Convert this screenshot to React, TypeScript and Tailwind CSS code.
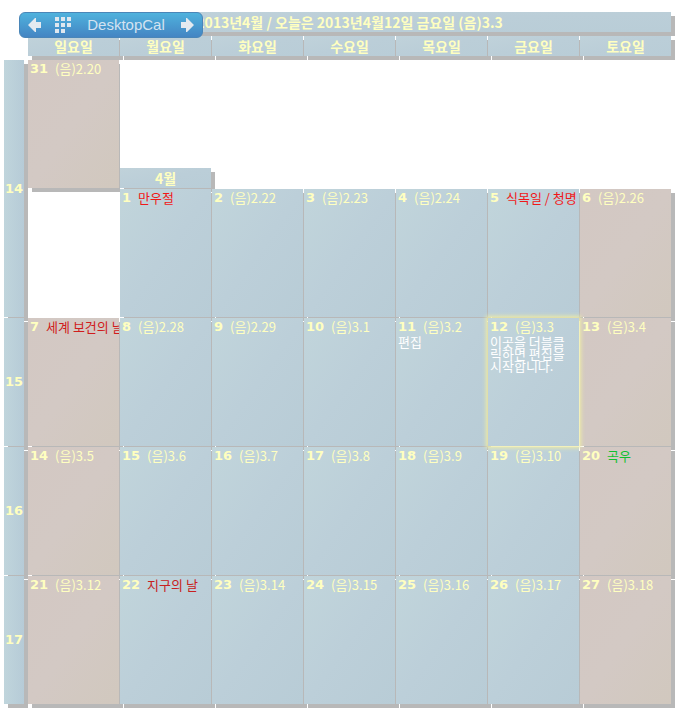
import React from 'react';
import clsx from 'clsx';

type Day = {
  date: number;
  label: string;
  color?: string;
  memo?: string;
  weekend?: boolean;
  today?: boolean;
};

type Week = { no: number; days: Day[] };

const WEEKDAYS = ['일요일', '월요일', '화요일', '수요일', '목요일', '금요일', '토요일'];

const APRIL_FIRST: Day[] = [
  { date: 1, label: '만우절', color: 'text-[#f01818]' },
  { date: 2, label: '(음)2.22' },
  { date: 3, label: '(음)2.23' },
  { date: 4, label: '(음)2.24' },
  { date: 5, label: '식목일 / 청명', color: 'text-[#f01818]' },
  { date: 6, label: '(음)2.26', weekend: true },
];

const WEEKS: Week[] = [
  {
    no: 15,
    days: [
      { date: 7, label: '세계 보건의 날', color: 'text-[#d01c1c]', weekend: true },
      { date: 8, label: '(음)2.28' },
      { date: 9, label: '(음)2.29' },
      { date: 10, label: '(음)3.1' },
      { date: 11, label: '(음)3.2', memo: '편집' },
      { date: 12, label: '(음)3.3', memo: '이곳을 더블클릭하면 편집을 시작합니다.', today: true },
      { date: 13, label: '(음)3.4', weekend: true },
    ],
  },
  {
    no: 16,
    days: [
      { date: 14, label: '(음)3.5', weekend: true },
      { date: 15, label: '(음)3.6' },
      { date: 16, label: '(음)3.7' },
      { date: 17, label: '(음)3.8' },
      { date: 18, label: '(음)3.9' },
      { date: 19, label: '(음)3.10' },
      { date: 20, label: '곡우', color: 'text-[#10c030]', weekend: true },
    ],
  },
  {
    no: 17,
    days: [
      { date: 21, label: '(음)3.12', weekend: true },
      { date: 22, label: '지구의 날', color: 'text-[#c82020]' },
      { date: 23, label: '(음)3.14' },
      { date: 24, label: '(음)3.15' },
      { date: 25, label: '(음)3.16' },
      { date: 26, label: '(음)3.17' },
      { date: 27, label: '(음)3.18', weekend: true },
    ],
  },
];

const GRID = 'grid grid-cols-[23px_repeat(7,minmax(0,1fr))] gap-px';
const SHADOW = 'shadow-[4px_4px_0_#b8b8b8]';
const BAR = 'bg-linear-to-br from-[#c0d2da] via-[#bbced8] to-[#b9cdd7]';
const BAR_TEXT = 'text-sm leading-5 font-bold';

const Toolbar: React.FC = () => (
  <div className="absolute top-3 left-[19px] z-20 flex h-[26px] w-[184px] items-center rounded-md border border-[#4a86b8] bg-linear-to-b from-[#4fb2dd] to-[#4485c3] px-2">
    <button type="button" aria-label="이전 달" className="text-[#e4eaf0]">
      <svg width="14" height="16" viewBox="0 0 14 16" fill="currentColor">
        <path d="M0 8 L7 1 H8 V5 H13 V11 H8 V15 H7 Z" />
      </svg>
    </button>
    <button type="button" aria-label="메뉴" className="ml-3 text-[#dfe7ef]">
      <svg width="18" height="18" viewBox="0 0 18 18" fill="currentColor">
        <path d="M1 1h4v4h-4z M7 1h4v4h-4z M13 1h4v4h-4z M1 7h4v4h-4z M7 7h4v4h-4z M13 7h4v4h-4z M1 13h4v4h-4z M7 13h4v4h-4z" />
      </svg>
    </button>
    <span className="flex-1 text-center font-['Liberation_Sans',sans-serif] text-[15px] text-[#d3e3f1]">DesktopCal</span>
    <button type="button" aria-label="다음 달" className="text-[#e4eaf0]">
      <svg width="14" height="16" viewBox="0 0 14 16" fill="currentColor">
        <path d="M14 8 L7 1 H6 V5 H1 V11 H6 V15 H7 Z" />
      </svg>
    </button>
  </div>
);

const WeekNo: React.FC<{ no: number; tall?: boolean }> = ({ no, tall }) => (
  <th
    scope="row"
    className={clsx(
      "mr-[3px] flex items-center justify-center bg-linear-to-r from-[#c0d5dc] to-[#b6cbd7] p-0 font-['DejaVu_Sans',sans-serif] font-bold",
      SHADOW,
      tall && 'row-span-2',
    )}
  >
    {no}
  </th>
);

const DayCell: React.FC<{ day: Day; className?: string }> = ({ day, className }) => (
  <td
    className={clsx(
      'h-32 overflow-hidden p-0 pl-0.5',
      day.weekend
        ? 'bg-linear-to-br from-[#d3c8c3] via-[#d3c9c4] to-[#d1c8be]'
        : 'bg-linear-to-br from-[#c1d5db] via-[#bccfd9] to-[#b8ccd6]',
      day.today ? 'relative z-10 shadow-[0_0_4px_2px_#eeeca6]' : SHADOW,
      className,
    )}
  >
    <div className="flex h-[18px] items-center gap-[7px] whitespace-nowrap">
      <span className="font-['DejaVu_Sans',sans-serif] font-bold">{day.date}</span>
      <span className={day.color}>{day.label}</span>
    </div>
    {day.memo && <p className="pr-2 leading-3 text-white">{day.memo}</p>}
  </td>
);

export default function App() {
  return (
    <main className="relative min-h-screen bg-white pt-3 pr-2 pb-2 pl-1 font-['Noto_Sans_CJK_KR',sans-serif] text-[13px] text-[#ffffc0]">
      <Toolbar />
      <h1 className={clsx('mb-1 ml-6 h-5 text-center', BAR_TEXT, BAR, SHADOW)}>
        2013년4월 / 오늘은 2013년4월12일 금요일 (음)3.3
      </h1>

      <table className="flex flex-col gap-1">
        <thead className="block">
          <tr className={GRID}>
            <td className="p-0" />
            {WEEKDAYS.map((name) => (
              <th key={name} scope="col" className={clsx('h-5 p-0', BAR_TEXT, BAR, SHADOW)}>
                {name}
              </th>
            ))}
          </tr>
        </thead>
        <tbody className={GRID}>
          {/* the last day of March sits one row above the first of April */}
          <tr className="contents">
            <WeekNo no={14} tall />
            <DayCell
              day={{ date: 31, label: '(음)2.20', weekend: true }}
              className="[clip-path:inset(0_-1px_-4px_0)]"
            />
            <th className={clsx('h-5 self-end p-0', BAR_TEXT, BAR, SHADOW)}>4월</th>
          </tr>
          <tr className="contents">
            {APRIL_FIRST.map((day) => (
              <DayCell key={day.date} day={day} className={day.date === 1 ? 'col-start-3' : undefined} />
            ))}
          </tr>
          {WEEKS.map((week) => (
            <tr key={week.no} className="contents">
              <WeekNo no={week.no} />
              {week.days.map((day) => (
                <DayCell key={day.date} day={day} />
              ))}
            </tr>
          ))}
        </tbody>
      </table>
    </main>
  );
}
